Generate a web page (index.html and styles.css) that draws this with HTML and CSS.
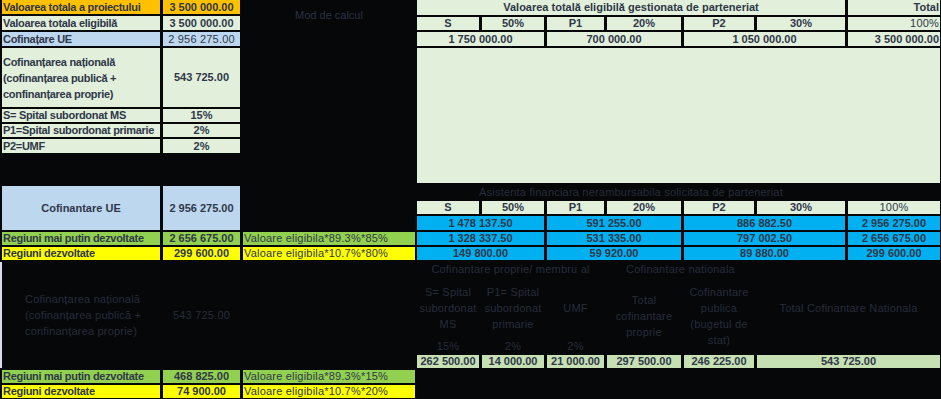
FILE: index.html
```html
<!DOCTYPE html>
<html lang="ro">
<head>
<meta charset="utf-8">
<title>Calcul cofinanțare</title>
<link rel="stylesheet" href="styles.css">
</head>
<body>
<div class="sheet">
  <div class="left">
    <div class="c orange lbl">Valoarea totala a proiectului</div>
    <div class="c orange num">3 500 000.00</div>
    <div class="mod">Mod de calcul</div>

    <div class="c lg lbl">Valoarea totala eligibilă</div>
    <div class="c lg num">3 500 000.00</div>

    <div class="c lb lbl">Cofinațare UE</div>
    <div class="c lb num reg">2 956 275.00</div>
    <div class="blank-c"></div>

    <div class="c lg lbl multi">Cofinanțarea națională<br>(cofinanțarea publică +<br>confinanțarea proprie)</div>
    <div class="c lg num">543 725.00</div>

    <div class="c lg lbl">S= Spital subordonat MS</div>
    <div class="c lg num">15%</div>

    <div class="c lg lbl">P1=Spital subordonat primarie</div>
    <div class="c lg num">2%</div>

    <div class="c lg lbl">P2=UMF</div>
    <div class="c lg num">2%</div>

    <div class="spacer"></div>

    <div class="c lb ctr">Cofinantare UE</div>
    <div class="c lb num">2 956 275.00</div>

    <div class="c green lbl">Regiuni mai putin dezvoltate</div>
    <div class="c green num">2 656 675.00</div>
    <div class="c green frm">Valoare eligibila*89.3%*85%</div>

    <div class="c yellow lbl">Regiuni dezvoltate</div>
    <div class="c yellow num">299 600.00</div>
    <div class="c yellow frm">Valoare eligibila*10.7%*80%</div>

    <div class="dark natl">Cofinanțarea națională<br>(cofinanțarea publică +<br>confinanțarea proprie)</div>
    <div class="dark ctr">543 725.00</div>
    <div></div>

    <div class="c green lbl">Regiuni mai putin dezvoltate</div>
    <div class="c green num">468 825.00</div>
    <div class="c green frm">Valoare eligibila*89.3%*15%</div>

    <div class="c yellow lbl">Regiuni dezvoltate</div>
    <div class="c yellow num">74 900.00</div>
    <div class="c yellow frm">Valoare eligibila*10.7%*20%</div>
  </div>

  <div class="right">
    <div class="c lg ctr span6">Valoarea totală eligibilă gestionata de parteneriat</div>
    <div class="c lg rt">Total</div>

    <div class="c lg ctr">S</div>
    <div class="c lg ctr">50%</div>
    <div class="c lg ctr">P1</div>
    <div class="c lg ctr">20%</div>
    <div class="c lg ctr">P2</div>
    <div class="c lg ctr">30%</div>
    <div class="c lg rt reg">100%</div>

    <div class="c lg ctr span2">1 750 000.00</div>
    <div class="c lg ctr span2">700 000.00</div>
    <div class="c lg ctr span2">1 050 000.00</div>
    <div class="c lg rt">3 500 000.00</div>

    <div class="c lg span7"></div>

    <div class="dark ctr span6">Asistenta financiara nerambursabila solicitata de parteneriat</div>
    <div></div>

    <div class="c lg ctr">S</div>
    <div class="c lg ctr">50%</div>
    <div class="c lg ctr">P1</div>
    <div class="c lg ctr">20%</div>
    <div class="c lg ctr">P2</div>
    <div class="c lg ctr">30%</div>
    <div class="c lg ctr reg">100%</div>

    <div class="c blue ctr span2">1 478 137.50</div>
    <div class="c blue ctr span2">591 255.00</div>
    <div class="c blue ctr span2">886 882.50</div>
    <div class="c blue ctr">2 956 275.00</div>

    <div class="c blue ctr span2">1 328 337.50</div>
    <div class="c blue ctr span2">531 335.00</div>
    <div class="c blue ctr span2">797 002.50</div>
    <div class="c blue ctr">2 656 675.00</div>

    <div class="c blue ctr span2">149 800.00</div>
    <div class="c blue ctr span2">59 920.00</div>
    <div class="c blue ctr span2">89 880.00</div>
    <div class="c blue ctr">299 600.00</div>

    <div class="dark ctr span3">Cofinantare proprie/ membru al</div>
    <div class="dark ctr span2">Cofinantare nationala</div>
    <div class="span2"></div>

    <div class="dark head">S= Spital<br>subordonat<br>MS</div>
    <div class="dark head">P1= Spital<br>subordonat<br>primarie</div>
    <div class="dark head">UMF</div>
    <div class="dark head tall">Total<br>cofinantare<br>proprie</div>
    <div class="dark head tall">Cofinantare<br>publica<br>(bugetul de<br>stat)</div>
    <div class="dark head span2">Total Cofinantare Nationala</div>

    <div class="dark ctr">15%</div>
    <div class="dark ctr">2%</div>
    <div class="dark ctr">2%</div>
    <div class="span2"></div>

    <div class="c pale ctr">262 500.00</div>
    <div class="c pale ctr">14 000.00</div>
    <div class="c pale ctr">21 000.00</div>
    <div class="c pale ctr">297 500.00</div>
    <div class="c pale ctr">246 225.00</div>
    <div class="c pale ctr span2">543 725.00</div>
  </div>
</div>
</body>
</html>
```
FILE: styles.css
```css
html, body {
  margin: 0;
  padding: 0;
  background: #050709;
}

body {
  font-family: "Liberation Sans", Arial, sans-serif;
  font-size: 11px;
  color: #2f3749;
  width: 941px;
  height: 399px;
  overflow: hidden;
}

.sheet {
  display: flex;
  gap: 2px;
  padding-left: 2px;
}

.left {
  display: grid;
  grid-template-columns: 158px 77px 172px;
  grid-template-rows: 14px 14px 14px 59px 13px 13px 14px 29px 44px 13px 13px 106px 13px 13px;
  column-gap: 3px;
  row-gap: 2px;
}

.right {
  display: grid;
  grid-template-columns: 62px 62px 57px 74px 70px 88px 92px;
  grid-template-rows: 15px 13px 14px 135px 14px 13px 14px 13px 13px 14px 59px 14px 13px;
  column-gap: 3px;
  row-gap: 2px;
}

.c {
  display: flex;
  align-items: center;
  font-weight: bold;
  white-space: nowrap;
  overflow: hidden;
  line-height: 13px;
}

.orange { background: #ffc000; }
.lg { background: #e2efda; }
.lb { background: #bdd7ee; }
.green { background: #92d050; }
.yellow { background: #ffff00; }
.blue { background: #00b0f0; }
.pale { background: #c6e0b4; }

.lbl {
  padding-left: 1px;
  letter-spacing: -0.3px;
}

.multi {
  white-space: normal;
  line-height: 16px;
}

.num, .ctr {
  justify-content: center;
  text-align: center;
}

.rt {
  justify-content: flex-end;
  padding-right: 1px;
}

.reg {
  font-weight: normal;
  letter-spacing: 0.2px;
}

.frm {
  font-weight: normal;
  letter-spacing: 0.2px;
  padding-left: 1px;
}

.mod {
  grid-column: 3;
  grid-row: 1 / span 2;
  display: flex;
  align-items: center;
  justify-content: center;
  color: #2c3342;
}

.blank-c {
  grid-row: span 7;
}

.spacer {
  grid-column: span 2;
}

.dark {
  display: flex;
  align-items: center;
  color: #272d3a;
  letter-spacing: 0.2px;
  line-height: 16px;
  white-space: nowrap;
}

.natl {
  padding-left: 23px;
  margin-left: -2px;
  border-left: 2px solid #d9dde3;
}

.head {
  justify-content: center;
  text-align: center;
}

.tall {
  grid-row: span 2;
}

.span2 { grid-column: span 2; }
.span3 { grid-column: span 3; }
.span6 { grid-column: span 6; }
.span7 { grid-column: span 7; }
```
